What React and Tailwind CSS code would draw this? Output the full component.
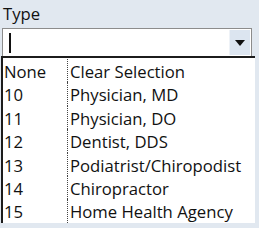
const rows = [
  ['None', 'Clear Selection'],
  ['10', 'Physician, MD'],
  ['11', 'Physician, DO'],
  ['12', 'Dentist, DDS'],
  ['13', 'Podiatrist/Chiropodist'],
  ['14', 'Chiropractor'],
  ['15', 'Home Health Agency'],
];

export default function App() {
  return (
    <div className="w-[259px] h-[228px] overflow-hidden bg-[#e1e8f0] text-[16.7px] text-[#111] font-['Open_Sans',sans-serif]">
      {/* Label */}
      <div className="h-[28px] pl-[3px] pt-[3px] leading-[22px]">Type</div>

      {/* Combo input */}
      <div className="ml-[2px] w-[250px] h-[28px] flex bg-white border border-[#8c8c8c] border-b-0">
        <div className="flex-1 flex items-center pl-[6px]">
          <div className="w-[2px] h-[20px] bg-[#111]" />
        </div>
        <div className="w-[21px] m-[1px] bg-[#dce5f0] flex items-center justify-center border-l border-[#eef2f7]">
          <svg width="10" height="6" viewBox="0 0 10 6">
            <path d="M0 0 H10 L5 6 Z" fill="#111" />
          </svg>
        </div>
      </div>

      {/* Dropdown list */}
      <div className="ml-[1px] w-[254px] pt-[1px] bg-white border-t-2 border-l-2 border-[#1c1c1c]">
        {rows.map(([code, name]) => (
          <div key={code} className="flex h-[23.4px] leading-[25px]">
            <div className="w-[64px] pl-[1px]">{code}</div>
            <div className="flex-1 pl-[2px] border-l border-dotted border-[#444] whitespace-nowrap">{name}</div>
          </div>
        ))}
      </div>
    </div>
  );
}
